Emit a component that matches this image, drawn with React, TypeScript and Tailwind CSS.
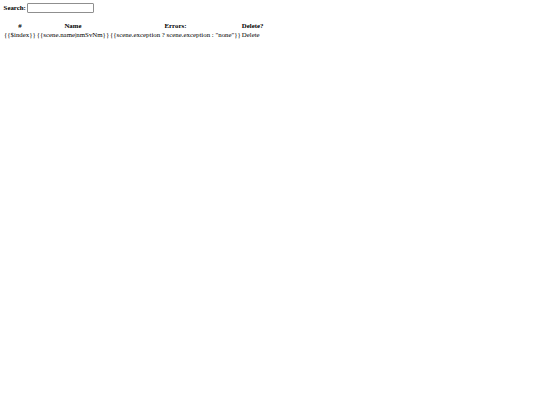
export default function App() {
  const rows = [
    {
      index: '{{$index}}',
      name: '{{scene.name|nmSvNm}}',
      errors: '{{scene.exception ? scene.exception : "none"}}',
    },
  ];

  return (
    <div className="min-h-screen bg-white px-[3.6px] pt-[3px] font-['Liberation_Serif',serif] text-[6.85px] leading-[1.2] text-black">
      {/* Search */}
      <form className="flex items-center gap-[1px]">
        <label className="font-bold">Search:</label>
        <input
          type="text"
          className="h-[9.5px] w-[67px] rounded-[1px] border-[0.6px] border-[#8f8f8f] bg-white px-[1px] text-[6.85px] outline-none"
        />
      </form>

      {/* Scenes */}
      <table className="mt-[8.8px] border-separate border-spacing-[0.9px]">
        <thead>
          <tr>
            <th className="p-[0.45px] text-center font-bold">#</th>
            <th className="p-[0.45px] text-center font-bold">Name</th>
            <th className="p-[0.45px] text-center font-bold">Errors:</th>
            <th className="p-[0.45px] text-center font-bold">Delete?</th>
          </tr>
        </thead>
        <tbody>
          {rows.map((r, i) => (
            <tr key={i}>
              <td className="p-[0.45px]">{r.index}</td>
              <td className="p-[0.45px]">{r.name}</td>
              <td className="p-[0.45px]">{r.errors}</td>
              <td className="p-[0.45px]">Delete</td>
            </tr>
          ))}
        </tbody>
      </table>
    </div>
  );
}
